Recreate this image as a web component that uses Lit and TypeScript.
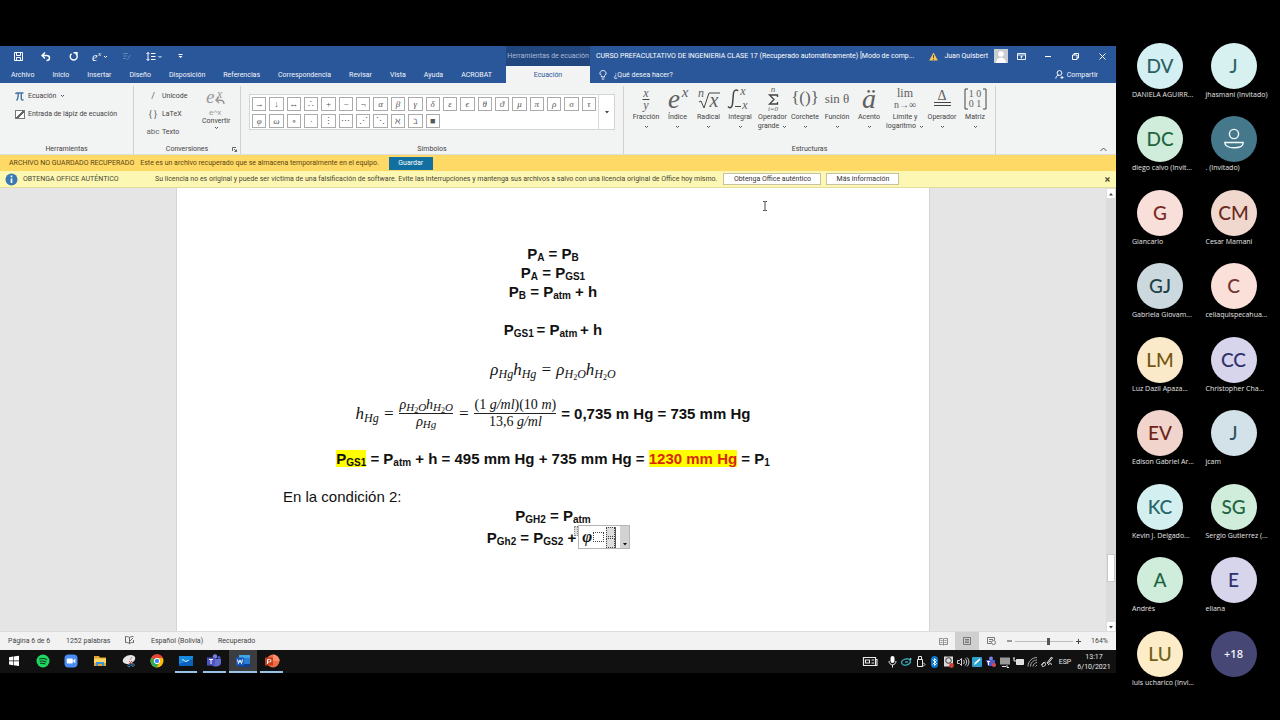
import { LitElement, html, svg, css } from "lit";
import { customElement } from "lit/decorators.js";
import { classMap } from "lit/directives/class-map.js";
import { styleMap } from "lit/directives/style-map.js";

const icon = (w: number, h: number, body: unknown) =>
  html`<svg width=${w} height=${h} viewBox="0 0 ${w} ${h}" fill="none" stroke="currentColor" aria-hidden="true">${body}</svg>`;
const chevron = () => icon(5, 4, svg`<path d="M1 1l1.5 1.5L4 1" stroke-width=".9"/>`);

const people = [
  ["DV", "DANIELA AGUIRR...", "#d5f0f2", "#2b6065"],
  ["J", "jhasmani (Invitado)", "#d6f1f0", "#2a6468"],
  ["DC", "diego calvo (Invit...", "#d0ecda", "#1f6640"],
  ["", ". (Invitado)", "#46788c", "#f4fafc"],
  ["G", "Giancarlo", "#f8dfda", "#7a2b21"],
  ["CM", "Cesar Mamani", "#f1d8cf", "#6b2a1c"],
  ["GJ", "Gabriela Giovam...", "#cbd8de", "#1d4044"],
  ["C", "celiaquispecahua...", "#fbdfd9", "#74352c"],
  ["LM", "Luz Dazil Apaza...", "#faeac9", "#735610"],
  ["CC", "Christopher Cha...", "#d7d5ec", "#30306b"],
  ["EV", "Edison Gabriel Ar...", "#f1d5cc", "#6e2417"],
  ["J", "jcam", "#d2e2e8", "#2a5562"],
  ["KC", "Kevin J. Delgado...", "#d3eff0", "#27656a"],
  ["SG", "Sergio Gutierrez (...", "#d0ecda", "#1d6540"],
  ["A", "Andrés", "#d0ecda", "#1d6540"],
  ["E", "eliana", "#d7d5ec", "#30306b"],
  ["LU", "luis ucharico (Invi...", "#fdecc8", "#705f12"],
  ["+18", "", "#464775", "#f1f1fb"],
];

@customElement("call-roster")
class CallRoster extends LitElement {
  static styles = css`
    :host { display: block; width: 164px; flex: none; box-sizing: border-box; padding: 43px 1px 16px 16px;
      font-family: "Open Sans", "Noto Sans", sans-serif; }
    .grid { list-style: none; margin: 0; padding: 0; height: 100%; display: grid; grid-template-columns: 1fr 1fr; grid-auto-rows: 1fr; }
    .person { min-width: 0; display: flex; flex-direction: column; }
    .avatar { width: 46px; height: 46px; margin-left: 5px; border-radius: 50%; display: flex; align-items: center; justify-content: center; font-family: Lato, "Open Sans", sans-serif; font-size: 19px; line-height: 20px; font-weight: 500; }
    .more { font-family: "Open Sans", sans-serif; font-size: 11px; font-weight: 600; }
    .name { color: #e4e4e4; font-size: 7px; line-height: 12px; white-space: nowrap; }
  `;
  render() {
    return html`<ul class="grid">${people.map(([initials, name, back, ink]) => html`
      <li class="person">
        <div class=${classMap({ avatar: true, more: initials === "+18" })} style=${styleMap({ background: back, color: ink })}>
          ${initials || icon(22, 22, svg`<circle cx="11" cy="6" r="4.6" stroke-width="1.4"/><path d="M1.8 14.5h18.4c0 3.6-4 5.3-9.2 5.3s-9.2-1.7-9.2-5.3z" stroke-width="1.4"/>`)}
        </div>
        <span class="name">${name}</span>
      </li>`)}</ul>`;
  }
}

const tabs = ["Archivo", "Inicio", "Insertar", "Diseño", "Disposición", "Referencias", "Correspondencia", "Revisar", "Vista", "Ayuda", "ACROBAT"];
const symbols = [..."→↓↔∴+−¬αβγδεϵθϑμπρστφω∘∙⋮⋯⋰⋱ℵℶ■"];
const t = (x: number, y: number, size: number, s: string, italic = true) =>
  svg`<text x=${x} y=${y} font-size=${size} font-family="Liberation Serif, serif" font-style=${italic ? "italic" : "normal"} text-anchor="middle" fill="#606060" stroke="none">${s}</text>`;
const structures: [string, string, number, unknown][] = [
  ["Fracción", "", 32, svg`${t(16, 9, 12, "x")}${t(16, 21, 12, "y")}<path d="M12.500 11.500h7"/>`],
  ["Índice", "", 31, svg`${t(12, 20, 27, "e")}${t(23, 9, 15, "x")}`],
  ["Radical", "", 31, svg`${t(8, 9, 12, "n")}${t(21, 19, 20, "x")}<path d="M6 14l2-1 3 7 5-15h11"/>`],
  ["Integral", "", 32, svg`<path d="M14 3c-1-2-4-1-4.500 2l-1 11c-.5 4-3 4.500-4.500 2.500" stroke-width="1.500"/>${t(19, 7, 12, "x")}${t(21, 21, 12, "x")}<path d="M11 18.500h6"/>`],
  ["Operador", "grande", 33, svg`${t(16, 4, 9, "n")}<path d="M20.500 9V7h-8l4.500 4.500-4.500 4.500h8v-2" stroke-width="1.300"/>${t(16, 23, 7, "i=0")}`],
  ["Corchete", "", 32, svg`${t(16, 15, 17, "{()}", false)}`],
  ["Función", "", 32, svg`${t(16, 15, 13, "sin θ", false)}`],
  ["Acento", "", 32, svg`${t(16, 20, 28, "ä")}`],
  ["Límite y", "logaritmo", 40, svg`${t(16, 9, 12, "lim", false)}${t(16, 20, 10, "n→∞", false)}`],
  ["Operador", "", 34, svg`<path d="M8 14.500h17M8 17.500h17"/>${t(16, 12, 14, "Δ", false)}`],
  ["Matriz", "", 32, svg`<path d="M9 1H6v20h3M24 1h3v20h-3"/>${t(16, 9, 10, "1 0", false)}${t(16, 19, 10, "0 1", false)}`],
];

const qat: [string, number, unknown][] = [
  ["Guardar", 27, icon(9, 9, svg`<path d="M.5.5h8v8h-8zM2.500.500v3h4v-3M2.500 8.500v-3h4v3"/>`)],
  ["Deshacer", 28, icon(10, 9, svg`<path d="M4 .5L1 3.500l3 3M1 3.500h4.500c4 0 4 5 0 5" stroke-width="1.400"/>`)],
  ["Rehacer", 26, icon(9, 9, svg`<path d="M6.500 1.500A3.500 3.500 0 1 1 2.500 1.800M4.500.800h3.500v3.500" stroke-width="1.400"/>`)],
];

const windows: [string, boolean, unknown][] = [
  ["Inicio", false, svg`<path d="M3 4.200l4-.6v4H3zM7.600 3.500L13 2.800v4.800H7.600zM3 8.200h4v4l-4-.6zM7.600 8.200H13V13l-5.400-.7z" fill="#fff" stroke="none"/>`],
  ["Spotify", false, svg`<circle cx="8" cy="8" r="6.500" fill="#1ed760" stroke="none"/><path d="M4.200 6c3-.8 5.500-.5 7.800.7M4.700 8.300c2.500-.6 4.500-.3 6.500.7M5.200 10.400c2-.4 3.600-.2 5.200.6" stroke="#12351f" stroke-width="1.100"/>`],
  ["Zoom", false, svg`<rect x="1.500" y="1.500" width="13" height="13" rx="4" fill="#4a8cf5" stroke="none"/><rect x="3.800" y="5.500" width="6" height="5" rx="1" fill="#fff" stroke="none"/><path d="M10.300 7.300l2-1.500v4.400l-2-1.500z" fill="#fff" stroke="none"/>`],
  ["Explorador", false, svg`<path d="M2 3h5l1 1.500h6V13H2z" fill="#e3a62a" stroke="none"/><path d="M2 5.500h12V10H2z" fill="#fbd768" stroke="none"/><path d="M4 13V9h8v4h-2v-2H6v2z" fill="#3f91d8" stroke="none"/>`],
  ["Recortes", false, svg`<ellipse cx="8" cy="6.500" rx="6.500" ry="4.200" fill="#e6e5e8" stroke="none" transform="rotate(-20 8 6.500)"/><path d="M9 7l2-3" stroke="#b98a8a"/><path d="M8 8l3 3M11 8l-3 3" stroke="#d64545"/><circle cx="8" cy="12.500" r="1.300" stroke="#3d80b8"/><circle cx="12" cy="12" r="1.300" stroke="#3d80b8"/>`],
  ["Chrome", false, svg`<circle cx="8" cy="8" r="6.500" fill="#fbbc05" stroke="none"/><path d="M8 8L2.400 4.700A6.500 6.500 0 0 1 14 5H8z" fill="#ea4335" stroke="none"/><path d="M8 8l-5.600-3.300A6.500 6.500 0 0 0 7.500 14.500L10 10z" fill="#34a853" stroke="none"/><circle cx="8" cy="8" r="2.700" fill="#4285f4" stroke="#fff"/>`],
  ["Pizarra", true, svg`<path d="M1 3h14v10H1z" fill="#1689e0" stroke="none"/><path d="M1 11l14-5v7H1z" fill="#0962bd" stroke="none"/><path d="M4 7c2-2 2 3 5 1 1-1 2 0 2 0" stroke="#fff"/>`],
  ["Teams", true, svg`<circle cx="9" cy="3.500" r="2.200" fill="#7b83eb" stroke="none"/><circle cx="13" cy="4.500" r="1.500" fill="#5059c9" stroke="none"/><path d="M5 6h10v4c0 4-8 5-10 1z" fill="#626bd0" stroke="none"/><path d="M1 4.500h8v8H1z" fill="#4b53bc" stroke="none"/><path d="M3 6.500h4M5 6.500v4.500" stroke="#fff"/>`],
  ["Word", true, svg`<path d="M4 2h11v12H4z" fill="#2b7cd3" stroke="none"/><path d="M4 2h11v3H4z" fill="#41a5ee" stroke="none"/><path d="M4 11h11v3H4z" fill="#103f91" stroke="none"/><path d="M1 4.500h8v8H1z" fill="#185abd" stroke="none"/><path d="M2.500 6.500l1 4L5 7l1.500 3.500 1-4" stroke="#fff"/>`],
  ["PowerPoint", true, svg`<circle cx="9" cy="8" r="6.500" fill="#ed6c47" stroke="none"/><path d="M9 8V1.500A6.500 6.500 0 0 1 15.500 8z" fill="#ff8f6b" stroke="none"/><path d="M1 4.500h8v8H1z" fill="#c43e1c" stroke="none"/><path d="M3.500 11V6.500h2c2 0 2 2.500 0 2.500h-2" stroke="#fff"/>`],
];

const tray: unknown[] = [
  svg`<path d="M-.5 2.500h12v8h-12z" stroke-width="1.200"/><path d="M1.500 5h4v3h-4zM7.500 5h2.500M7.500 8h2.500M11.500 4.500H13v6h-1.500" stroke-width="1.100"/>`,
  svg`<rect x="4.500" y="1" width="4" height="7" rx="2" fill="#fff" stroke="none"/><path d="M3 6c0 5 7 5 7 0M6.500 10v2.500"/>`,
  svg`<ellipse cx="6" cy="7" rx="4.500" ry="3" stroke="#39a3b3" stroke-width="1.500" transform="rotate(-15 6 7)"/><path d="M5 7h3" stroke="#6ed0dc"/><circle cx="10.500" cy="4" r="1" fill="#6ed0dc" stroke="none"/>`,
  svg`<path d="M3.500 4.500h5v7h-5zM4.500 4.500v-3h3v3M9 7.500l2 2-2 2"/>`,
  svg`<rect x="3" y="1" width="7" height="12" rx="3.500" fill="#0b78d0" stroke="none"/><path d="M4.500 4.500l4 4-2 2v-7l2 2-4 4" stroke="#fff" stroke-width=".900"/>`,
  svg`<path d="M2 1.500h9v10H2z" fill="#d8d8d8" stroke="none"/><circle cx="6.500" cy="5.500" r="2.800" stroke="#333"/><circle cx="9.500" cy="10.500" r="2.400" fill="#d63b32" stroke="none"/>`,
  svg`<path d="M1.500 5.500h2l2-2v7l-2-2h-2zM7.500 5c1 1 1 3 0 4M9.200 3.500c2 2 2 5 0 7M11 2.500c2.500 2.500 2.500 6.500 0 9" stroke-width=".900"/>`,
  svg`<rect x="2" y="2" width="10" height="10" rx="1" fill="#2ea0cd" stroke="none"/><path d="M4 10l1-2.500L9.500 3.500l1 1L6 9z" fill="#fff" stroke="none"/>`,
  svg`<circle cx="7" cy="3.500" r="2" fill="#7b83eb" stroke="none"/><path d="M2 5h9v6H4z" fill="#5059c9" stroke="none"/><path d="M3 6.500h3M4.500 6.500V10" stroke="#fff"/><circle cx="10" cy="10" r="2" fill="#d94a50" stroke="none"/>`,
  svg`<path d="M2 2.500h10v7H2z" fill="#9a9a9a" stroke="none"/><path d="M4 11.500h4M9 10v2.500h2"/>`,
  svg`<path d="M4.500 4.500h7v5h-7z" fill="#ddd"/><path d="M2 3v3h2M1 3h2" />`,
  svg`<path d="M2 11.500c0-5 4-9 9-9M4.500 11.500c0-4 3-6.500 6.500-6.500M7 11.500c0-2 2-4 4-4M9.500 11.500l1.500-1.500" stroke="#aaa"/>`,
  svg`<path d="M1.500 10c2-5 6-1 3 1s-4-2 1-4M7 8l4.500-6 1 1L8 8.500zM8 10c3-3 4-1 3 0" />`,
];

@customElement("app-root")
class AppRoot extends LitElement {
  static styles = css`
    :host { display: flex; min-height: 100vh; background: #000; color: #444; font-family: Roboto, "Open Sans", sans-serif; font-size: 7px; line-height: 10px; }
    * { box-sizing: border-box; }
    button { font: inherit; color: inherit; background: none; border: 0; padding: 0; margin: 0; display: flex; align-items: center; justify-content: center; white-space: nowrap; }
    svg { flex: none; overflow: visible; }
    .word { flex: 1; min-width: 0; display: flex; flex-direction: column; padding: 46px 0 47px; }
    .row { display: flex; align-items: center; white-space: nowrap; }
    .title { height: 20px; background: #2a579a; color: #fff; }
    .quick { width: 506px; padding-left: 5px; }
    .context { width: 84px; height: 20px; background: #21477e; color: #a9bbd8; justify-content: center; }
    .file { flex: 1; padding-left: 6px; overflow: hidden; }
    .user { gap: 6px; }
    .photo { width: 14px; height: 14px; background: #c9cdd3; }
    .ctl { width: 27px; height: 18px; }
    .dim { opacity: .25; }
    .tabs { height: 17px; background: #2a579a; color: #f2f5fa; padding-left: 11px; }
    .tablist { width: 495px; gap: 18px; }
    .active { width: 84px; height: 17px; background: #f3f3f3; color: #2a579a; }
    .ask { flex: 1; gap: 7px; justify-content: flex-start; padding-left: 9px; }
    .share { gap: 3px; padding-right: 18px; }
    .ribbon { height: 72px; background: #f2f3f3; display: flex; border-bottom: 1px solid #dcdcdc; }
    .group { margin: 3px 0 0; border-right: 1px solid #d0d0d0; display: flex; flex-direction: column; }
    .body { flex: 1; }
    .caption { height: 10px; display: flex; justify-content: center; }
    .tools { width: 134px; } .conv { width: 107px; } .syms { width: 383px; } .structs { width: 372px; }
    .toollist { display: flex; flex-direction: column; align-items: flex-start; padding: 5px 0 0 15px; gap: 8px; }
    .toollist button { gap: 4px; }
    .check { display: flex; gap: 3px; align-items: center; }
    .tick { appearance: none; width: 10px; height: 9px; margin: 0; border: 1px solid #777; background: linear-gradient(135deg, #fff 45%, #666 45%, #666 60%, #fff 60%); }
    .convbody { display: flex; padding: 5px 0 0 12px; gap: 10px; }
    .formats { display: flex; flex-direction: column; gap: 8px; width: 46px; }
    .formats button { gap: 2px; justify-content: flex-start; }
    .glyph { width: 14px; text-align: center; font-size: 9px; color: #666; }
    .word-glyph { font-size: 8px; }
    .convert { flex-direction: column; justify-content: flex-start; }
    .launcher { display: flex; align-items: center; justify-content: center; gap: 24px; padding-left: 29px; }
    .gallery { margin: 8px 8px 0; height: 36px; border: 1px solid #d4d4d4; background: #fff; display: flex; }
    .cells { flex: 1; display: grid; grid-template-columns: repeat(20, 1fr); grid-auto-rows: 14px; gap: 3px; padding: 2px; }
    .cell { border: 1px solid #ababab; font-family: "Liberation Serif", "DejaVu Serif", serif; font-size: 9px; line-height: 9px; color: #555; }
    .greek { font-style: italic; }
    .drop { width: 16px; border-left: 1px solid #d8d8d8; }
    .structbody { display: flex; padding: 2px 0 0 6px; }
    .structure { flex-direction: column; justify-content: flex-start; line-height: 9px; }
    .structure .art { height: 25px; display: flex; }
    .second { height: 9px; display: flex; gap: 3px; align-items: center; }
    .rest { flex: 1; display: flex; justify-content: flex-end; align-items: flex-end; padding: 0 9px 0 0; }
    .rescued { height: 16px; background: #ffd966; color: #5b4510; padding-left: 9px; gap: 6px; }
    .save { width: 44px; height: 13px; background: #11709f; color: #fff; margin-left: 4px; }
    .licence { height: 17px; background: #fcf7b2; border-bottom: 1px solid #e2dd9c; color: #4a4636; padding: 0 6px 0 5px; }
    .alert { width: 150px; gap: 5px; }
    .actions { flex: 1; gap: 5px; padding-left: 6px; }
    .actions button { height: 12px; border: 1px solid #c6c3a0; background: #fff; width: 98px; color: #333; }
    .actions .info { width: 73px; }
    .work { flex: 1; min-height: 0; display: flex; background: #e5e5e5; position: relative; }
    .canvas { flex: 1; display: flex; justify-content: center; }
    .page { width: 754px; background: #fff; border: solid #d5d5d5; border-width: 0 1px; padding: 56px 106px 0; color: #111; font: bold 15px/19px "Liberation Sans", Arial, sans-serif; text-align: center; white-space: nowrap; }
    .page p { margin: 0; }
    .blank { height: 19px; }
    .half { height: 14px; }
    .page sub { font-size: 10px; line-height: 0; vertical-align: -2px; }
    .math { font-family: "Liberation Serif", serif; font-weight: normal; font-style: italic; font-size: 17px; }
    .page .math sub { font-size: 12px; vertical-align: -3px; }
    .page .math sub sub { font-size: 8px; font-style: normal; vertical-align: -2px; }
    .eq { line-height: 24px; }
    .calc { height: 62px; display: flex; align-items: center; justify-content: center; gap: 5px; }
    .page .frac { display: inline-flex; flex-direction: column; font-size: 14px; line-height: 16px; }
    .page .frac sub { font-size: 11px; vertical-align: -2px; }
    .frac .num { border-bottom: 1px solid #222; }
    .up { font-style: normal; }
    .result { line-height: 29px; }
    .mark { background: #ff0; color: inherit; }
    .red { color: #d8280c; }
    .plain { text-align: left; font-weight: normal; }
    .last { display: flex; height: 24px; justify-content: center; align-items: center; gap: 2px; padding-left: 11px; }
    .editor { display: flex; width: 52px; height: 24px; border: 1px solid #b5b5b5; background: #fff; align-items: center; position: relative; padding-left: 2px; }
    .grip { position: absolute; left: -5px; top: 0; width: 4px; height: 10px; background: #ddd; border: 1px dotted #888; }
    .slot { width: 11px; height: 10px; border: 1px dotted #444; }
    .stack { display: flex; flex-direction: column; gap: 1px; background: #ddd; margin-left: 2px; border-right: 1px solid #555; }
    .stack .slot { width: 9px; height: 10px; }
    .menu { margin-left: auto; width: 9px; height: 22px; background: #d2d2d2; align-items: flex-end; padding-bottom: 2px; }
    .phi { font: italic bold 17px/20px "Liberation Serif", serif; width: 12px; }
    .scroll { width: 10px; background: #dcdcdc; display: flex; flex-direction: column; padding: 1px 1px 0; }
    .scroll button { height: 9px; background: #fff; }
    .track { flex: 1; display: flex; flex-direction: column; justify-content: flex-end; padding-bottom: 40px; }
    .thumb { height: 28px; background: #fff; border: 1px solid #c9c9c9; }
    .pointer { position: absolute; left: 762px; top: 13px; color: #333; }
    .status { height: 19px; background: #f2f2f2; color: #444; border-top: 1px solid #dcdcdc; padding: 0 8px; }
    .facts { flex: 1; }
    .pages { width: 58px; } .words { width: 59px; } .proof { width: 26px; } .lang { width: 67px; }
    .view { width: 24px; height: 18px; color: #777; }
    .on { background: #cfcfcf; }
    .zoom { appearance: none; width: 58px; height: 10px; margin: 0 3px 0 0; background: linear-gradient(#bbb, #bbb) center / 100% 1px no-repeat; }
    .zoom::-webkit-slider-thumb { appearance: none; width: 3px; height: 7px; background: #555; }
    .percent { width: 27px; text-align: right; }
    .taskbar { height: 23px; background: #111; color: #e8e8e8; }
    .apps { display: grid; width: 286px; grid-template-columns: repeat(10, 1fr); height: 23px; }
    .app { border: solid transparent; border-width: 0 0 2px; }
    .running { border-bottom-color: #9ac3e8; margin: 0 3px; }
    .current { background: #3b3d40; margin: 0; }
    .tray { flex: 1; justify-content: flex-end; gap: 1px; }
    .tray svg:first-child { margin-right: 8px; }
    .esp { width: 24px; text-align: center; }
    .clock { width: 34px; text-align: center; line-height: 10px; margin-right: 5px; }
  `;

  render() {
    const down = () => icon(6, 4, svg`<path d="M1 1h4L3 3.500z" fill="currentColor" stroke="none"/>`);
    const ho = html`<sub>H<sub>2</sub>O</sub>`;
    return html`
      <main class="word">
        <header class="row title">
          <div class="row quick">
            ${qat.map(([label, w, art]) => html`<button aria-label=${label} style=${styleMap({ width: w + "px" })}>${art}</button>`)}
            <button aria-label="Ecuación" class="ctl">${icon(20, 11, svg`<text x="2" y="10" font-size="12" font-family="Liberation Serif, serif" font-style="italic" fill="#fff" stroke="none">e</text><text x="8" y="5" font-size="7" font-family="Liberation Serif, serif" font-style="italic" fill="#fff" stroke="none">x</text><path d="M14 5l1.500 1.500L17 5"/>`)}</button>
            <button aria-label="Editar" class="ctl dim">${icon(9, 9, svg`<path d="M1 1.500h5M1 4h4M1 6.500h3M5 8l3.500-5"/>`)}</button>
            <button aria-label="Interlineado" class="ctl">${icon(16, 9, svg`<path d="M2 .5v8M.5 2L2 .5 3.500 2M.5 7L2 8.500 3.500 7M5 1.500h4.500M5 4.500h4.500M5 7.500h4.500M12.500 4L14 5.500 15.500 4"/>`)}</button>
            <button aria-label="Personalizar" class="ctl">${icon(5, 5, svg`<path d="M.5.500h4"/><path d="M.5 2h4l-2 2z" fill="currentColor" stroke="none"/>`)}</button>
          </div>
          <div class="row context">Herramientas de ecuación</div>
          <div class="file">CURSO PREFACULTATIVO DE INGENIERIA CLASE 17 (Recuperado automáticamente) [Modo de comp...</div>
          <div class="row user">
            ${icon(9, 9, svg`<path d="M4.500.500L8.800 8.500H.2z" fill="#f7c65c" stroke="none"/><path d="M4.500 3v3M4.500 6.800v1" stroke="#6b4a10"/>`)}
            <span>Juan Quisbert</span>
            <span class="photo">${icon(14, 14, svg`<circle cx="7" cy="5" r="2.800" fill="#fff" stroke="none"/><path d="M2 14c0-7 10-7 10 0z" fill="#fff" stroke="none"/>`)}</span>
          </div>
          <button class="ctl" aria-label="Opciones de cinta">${icon(9, 7, svg`<path d="M.5.500h8v6h-8zM.5 2h8M4.500 5.500V3M3.300 4.200L4.500 3l1.200 1.200" stroke-width=".900"/>`)}</button>
          <button class="ctl" aria-label="Minimizar">${icon(7, 7, svg`<path d="M0 3.500h6"/>`)}</button>
          <button class="ctl" aria-label="Restaurar">${icon(7, 7, svg`<path d="M.5 2h4.500v4.500H.5zM2 2V.5h4.500V5H5"/>`)}</button>
          <button class="ctl" aria-label="Cerrar">${icon(7, 7, svg`<path d="M.5.500l6 6M6.500.500l-6 6"/>`)}</button>
        </header>
        <nav class="row tabs">
          <div class="row tablist">${tabs.map((x) => html`<button>${x}</button>`)}</div>
          <button class="active">Ecuación</button>
          <button class="ask">${icon(8, 10, svg`<path d="M2.500 7V5.800C-.6 3.500 1.500.500 4 .500s4.600 3 1.500 5.300V7zM2.800 9h2.500"/>`)}<span>¿Qué desea hacer?</span></button>
          <button class="share">${icon(9, 9, svg`<circle cx="4.500" cy="3" r="2.400"/><path d="M.8 8.500C1 6 2.500 5 4.500 5.300M5.500 7.500h3M7 6v3"/>`)}Compartir</button>
        </nav>
        <section class="ribbon">
          <div class="group tools">
            <div class="body toollist">
              <button>${icon(9, 9, svg`<path d="M.5 2C1 .8 2 1 3 1h5.500M3.300 1c0 4-.3 6-1.800 7.500M6.300 1v5.500c0 1.500 1 2 2.200 1" stroke="#44729f" stroke-width="1.400"/>`)}Ecuación ${chevron()}</button>
              <label class="check"><input class="tick" type="checkbox">Entrada de lápiz de ecuación</label>
            </div>
            <div class="caption">Herramientas</div>
          </div>
          <div class="group conv">
            <div class="body convbody">
              <div class="formats">
                <button><span class="glyph">/</span>Unicode</button>
                <button><span class="glyph">{ }</span>LaTeX</button>
                <button><span class="glyph word-glyph">abc</span>Texto</button>
              </div>
              <button class="convert">${icon(26, 25, svg`<text x="3" y="12" font-size="19" font-family="Liberation Serif, serif" font-style="italic" fill="#999" stroke="none">e</text><text x="14" y="7" font-size="12" font-family="Liberation Serif, serif" font-style="italic" fill="#999" stroke="none">x</text><path d="M21 13c0-4-3-4-7-4M16 6l-3 3 3 3" stroke="#999" stroke-width="1.500"/><text x="6" y="24" font-size="8" font-family="Liberation Sans, sans-serif" fill="#999" stroke="none">e^x</text>`)}<span>Convertir</span>${chevron()}</button>
            </div>
            <div class="caption launcher">Conversiones ${icon(5, 5, svg`<path d="M.5 4V.5H4M2 2l2.500 2.500V2.500M4.500 4.500h-2" stroke-width=".800"/>`)}</div>
          </div>
          <div class="group syms">
            <div class="body"><div class="gallery">
              <div class="cells">${symbols.map((s) => html`<button class=${classMap({ cell: true, greek: /[α-ωϵϑ]/.test(s) })}>${s}</button>`)}</div>
              <button class="drop" aria-label="Más símbolos">${down()}</button>
            </div></div>
            <div class="caption">Símbolos</div>
          </div>
          <div class="group structs">
            <div class="body structbody">${structures.map(([a, b, w, art]) => html`
              <button class="structure" style=${styleMap({ width: w + "px" })}>
                <span class="art">${icon(32, 24, art)}</span><span>${a}</span><span class="second">${b}${chevron()}</span>
              </button>`)}</div>
            <div class="caption">Estructuras</div>
          </div>
          <div class="rest"><button aria-label="Contraer">${icon(7, 7, svg`<path d="M.5 4l3-3 3 3" stroke-width=".900"/>`)}</button></div>
        </section>
        <section class="row rescued"><span>ARCHIVO NO GUARDADO RECUPERADO</span><span>Este es un archivo recuperado que se almacena temporalmente en el equipo.</span><button class="save">Guardar</button></section>
        <section class="row licence">
          <div class="row alert">${icon(13, 13, svg`<circle cx="6.500" cy="6.500" r="6" fill="#3b79b5" stroke="none"/><path d="M6.500 5.500v4.500M6.500 2.500v1.800" stroke="#fff" stroke-width="1.700"/>`)}OBTENGA OFFICE AUTÉNTICO</div>
          <span>Su licencia no es original y puede ser víctima de una falsificación de software. Evite las interrupciones y mantenga sus archivos a salvo con una licencia original de Office hoy mismo.</span>
          <div class="row actions"><button>Obtenga Office auténtico</button><button class="info">Más información</button></div>
          <button aria-label="Cerrar aviso">${icon(5, 5, svg`<path d="M.5.500l4 4M4.500.500l-4 4" stroke-width="1.200"/>`)}</button>
        </section>
        <section class="work">
          <div class="canvas"><article class="page">
            <p>P<sub>A</sub> = P<sub>B</sub></p>
            <p>P<sub>A</sub> = P<sub>GS1</sub></p>
            <p>P<sub>B</sub> = P<sub>atm</sub> + h</p>
            <p class="blank"></p>
            <p>P<sub>GS1 </sub>= P<sub>atm </sub>+ h</p>
            <p class="blank"></p>
            <p class="math eq">ρ<sub>Hg</sub>h<sub>Hg</sub> = ρ${ho}h${ho}</p>
            <div class="calc">
              <span class="math">h<sub>Hg</sub> =</span>
              <span class="math frac"><span class="num">ρ${ho}h${ho}</span><span>ρ<sub>Hg</sub></span></span>
              <span class="math">=</span>
              <span class="math frac"><span class="num"><span class="up">(1 </span>g/ml<span class="up">)(10 </span>m<span class="up">)</span></span><span><span class="up">13,6 </span>g/ml</span></span>
              <span>= 0,735 m Hg = 735 mm Hg</span>
            </div>
            <p class="result"><mark class="mark">P<sub>GS1</sub></mark> = P<sub>atm</sub> + h = 495 mm Hg + 735 mm Hg = <mark class="mark red">1230 mm Hg</mark> = P<sub>1</sub></p>
            <p class="half"></p>
            <p class="plain">En la condición 2:</p>
            <p>P<sub>GH2</sub> = P<sub>atm</sub></p>
            <div class="last"><span>P<sub>Gh2</sub> = P<sub>GS2</sub> +</span>
              <span class="editor"><span class="grip"></span><span class="phi">φ</span><span class="slot"></span><span class="stack"><span class="slot"></span><span class="slot"></span></span><button class="menu" aria-label="Opciones de ecuación">${down()}</button></span>
            </div>
          </article></div>
          <div class="scroll"><button aria-label="Arriba">${icon(6, 4, svg`<path d="M1 3.500h4L3 1z" fill="currentColor" stroke="none"/>`)}</button><div class="track"><div class="thumb"></div></div><button aria-label="Abajo">${down()}</button></div>
          <span class="pointer">${icon(6, 10, svg`<path d="M1 .5h1.500l.5.500.5-.500H5M3 1v8M1 9.500h1.500L3 9l.5.500H5" stroke-width=".900"/>`)}</span>
        </section>
        <footer class="row status">
          <div class="row facts"><span class="pages">Página 6 de 6</span><span class="words">1252 palabras</span><span class="proof">${icon(9, 8, svg`<path d="M4.500 1.500C3 .5 2 .5.500.500v6c1.500 0 2.500 0 4 1zM4.500 1.500c1-.7 2-1 4-1M4.500 7.500c1-1 2.500-1 4-1V4M5 5l3-3" stroke-width=".800"/>`)}</span><span class="lang">Español (Bolivia)</span><span>Recuperado</span></div>
          <button class="view" aria-label="Modo de lectura">${icon(9, 7, svg`<path d="M4.500 1v6M.5.500h3l1 .5 1-.5h3v6h-3l-1 .5-1-.5h-3zM1.500 2.500h2M1.500 4.500h2M5.500 2.500h2M5.500 4.500h2" stroke-width=".800"/>`)}</button>
          <button class="view on" aria-label="Diseño de impresión">${icon(8, 8, svg`<path d="M.5.500h7v7h-7zM2 2.500h4M2 4h4M2 5.500h4"/>`)}</button>
          <button class="view" aria-label="Diseño web">${icon(9, 8, svg`<path d="M7.500 3V.5h-7v6H4M2 2.500h4M2 4.500h2"/><circle cx="6.500" cy="5.500" r="2"/>`)}</button>
          <button aria-label="Alejar">${icon(12, 6, svg`<path d="M4 3h5"/>`)}</button>
          <input class="zoom" type="range" min="0" max="100" value="59" aria-label="Zoom">
          <button aria-label="Acercar">${icon(5, 5, svg`<path d="M0 2.500h5M2.500 0v5"/>`)}</button>
          <span class="percent">164%</span>
        </footer>
        <footer class="row taskbar">
          <div class="apps">${windows.map(([label, run, art]) => html`<button aria-label=${label} class=${classMap({ app: true, running: run, current: label === "Word" })}>${icon(16, 16, art)}</button>`)}</div>
          <div class="row tray">${tray.map((art) => icon(13, 13, art))}</div>
          <span class="esp">ESP</span>
          <div class="clock">13:17<br>6/10/2021</div>
        </footer>
      </main>
      <call-roster></call-roster>`;
  }
}
